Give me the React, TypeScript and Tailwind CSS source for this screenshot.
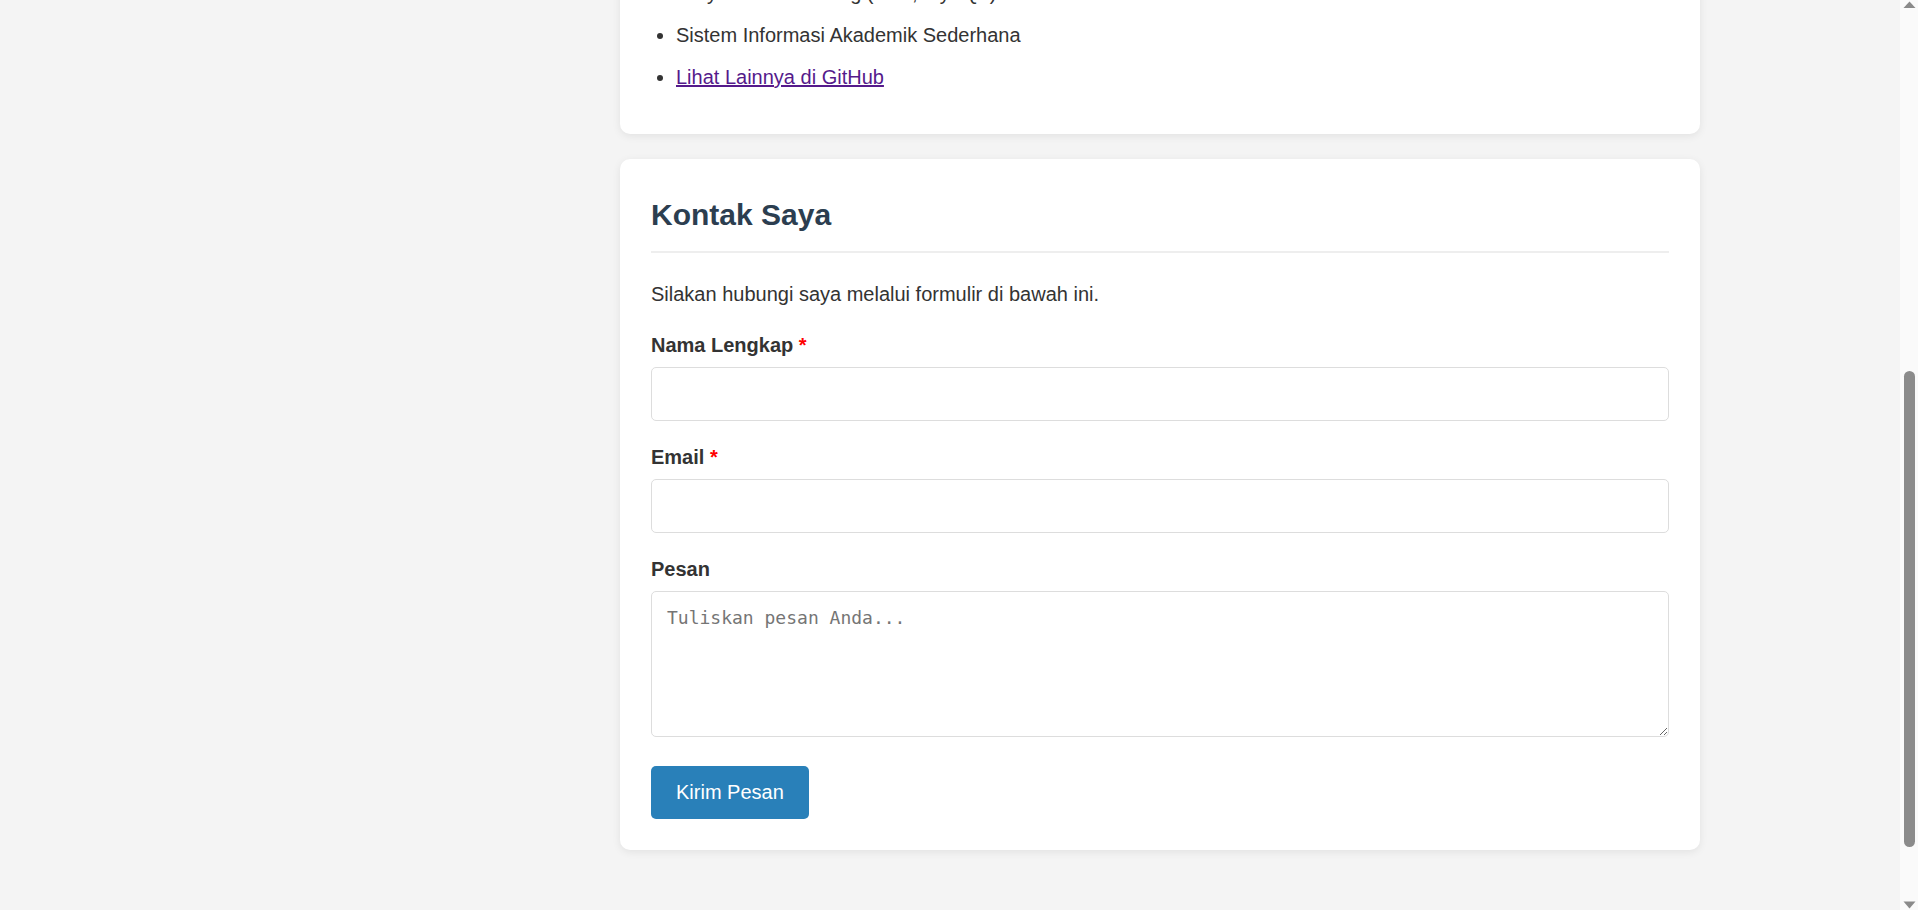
import React from 'react';

const ScrollBar = () => (
  <div className="w-[18px] h-[910px] shrink-0 bg-[#fafafa] flex flex-col items-center">
    <svg width="13" height="8" viewBox="0 0 13 8" className="mt-[1px] shrink-0">
      <path d="M6.5 0.5 L12.5 7 L0.5 7 Z" fill="#8a8a8a" />
    </svg>
    <div className="h-[362px] shrink-0" />
    <div className="w-[11px] h-[476px] rounded-full bg-[#8b8b8b] shrink-0" />
    <div className="flex-1" />
    <svg width="13" height="9" viewBox="0 0 13 9" className="mb-[1px] shrink-0">
      <path d="M0.5 1.5 L12.5 1.5 L6.5 8.5 Z" fill="#8a8a8a" />
    </svg>
  </div>
);

const Field = ({
  label,
  required,
  children,
  last,
}: {
  label: string;
  required?: boolean;
  children: React.ReactNode;
  last?: boolean;
}) => (
  <div className={last ? 'mb-[29px]' : 'mb-[20px]'}>
    <label className="block font-bold leading-[32px] mb-[6px]">
      {label}
      {required && <span className="text-[red]"> *</span>}
    </label>
    {children}
  </div>
);

export default function App() {
  return (
    <div className="h-[910px] overflow-hidden flex bg-[#f4f4f4] text-[#333] text-[20px] leading-[32px] font-['Liberation_Sans',Arial,sans-serif]">
      <main className="flex-1 flex flex-col pl-[620px]">
        {/* Proyek card (scrolled past) */}
        <section className="w-[1080px] mt-[-54px] bg-white rounded-[10px] shadow-[0_2px_8px_rgba(0,0,0,0.08)] px-[31px] pt-[31px] pb-[41px]">
          <ul className="list-disc pl-[25px]">
            <li className="mb-[10px]">Proyek Web Landing (PHP, MySQL)</li>
            <li className="mb-[10px]">Sistem Informasi Akademik Sederhana</li>
            <li>
              <a href="#" className="text-[#551a8b] underline">
                Lihat Lainnya di GitHub
              </a>
            </li>
          </ul>
        </section>

        {/* Kontak */}
        <section className="w-[1080px] mt-[25px] bg-white rounded-[10px] shadow-[0_2px_8px_rgba(0,0,0,0.08)] p-[31px]">
          <h2 className="text-[30px] font-bold leading-[48px] text-[#2c3e50] pt-[1px] pb-[12px] border-b-2 border-[#eee] mb-[25px]">
            Kontak Saya
          </h2>
          <p className="mb-[19px]">Silakan hubungi saya melalui formulir di bawah ini.</p>
          <form onSubmit={(e) => e.preventDefault()}>
            <Field label="Nama Lengkap" required>
              <input type="text" className="block w-full h-[54px] px-[15px] border border-[#ddd] rounded-[5px] bg-white outline-none" />
            </Field>
            <Field label="Email" required>
              <input type="email" className="block w-full h-[54px] px-[15px] border border-[#ddd] rounded-[5px] bg-white outline-none" />
            </Field>
            <Field label="Pesan" last>
              <textarea
                placeholder="Tuliskan pesan Anda..."
                className="block w-full h-[146px] p-[15px] border border-[#ddd] rounded-[5px] bg-white outline-none resize-y font-['DejaVu_Sans_Mono',monospace] text-[18px] leading-[21px] placeholder:text-[#757575]"
              />
            </Field>
            <button type="submit" className="bg-[#2980b9] text-white px-[25px] py-[15px] leading-[23px] rounded-[5px]">
              Kirim Pesan
            </button>
          </form>
        </section>
      </main>
      <ScrollBar />
    </div>
  );
}
